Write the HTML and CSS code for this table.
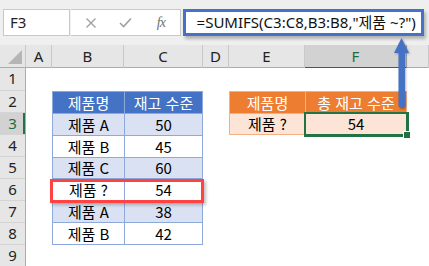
FILE: index.html
```html
<!DOCTYPE html>
<html lang="ko">
<head>
<meta charset="utf-8">
<link rel="stylesheet" href="styles.css">
</head>
<body>
<div class="app">
  <div class="fbar">
    <div class="namebox">F3</div>
    <div class="fbtns">
      <svg class="ic" width="12" height="12" viewBox="0 0 12 12"><path d="M1.5 1.5 L10.5 10.5 M10.5 1.5 L1.5 10.5" stroke="#a0a0a0" stroke-width="1.4" fill="none"/></svg>
      <svg class="ic" width="13" height="11" viewBox="0 0 13 11"><path d="M1 6 L4.6 9.5 L12 1.5" stroke="#a0a0a0" stroke-width="1.6" fill="none"/></svg>
      <span class="fx">fx</span>
    </div>
    <div class="finput">=SUMIFS(C3:C8,B3:B8,"제품 ~?")</div>
  </div>
  <div class="sheet">
    <div class="corner"><span class="tri"></span></div>
    <div class="colheads">
      <div class="ch">A</div>
      <div class="ch">B</div>
      <div class="ch">C</div>
      <div class="ch">D</div>
      <div class="ch">E</div>
      <div class="ch active">F</div>
      <div class="ch"></div>
    </div>
    <div class="rowheads">
      <div class="rh first">1</div>
      <div class="rh">2</div>
      <div class="rh active">3</div>
      <div class="rh">4</div>
      <div class="rh">5</div>
      <div class="rh">6</div>
      <div class="rh">7</div>
      <div class="rh">8</div>
      <div class="rh">9</div>
    </div>
    <div class="body">
      <div class="tbl t1">
        <div class="c hd">제품명</div><div class="c hd">재고 수준</div>
        <div class="c band">제품 A</div><div class="c band">50</div>
        <div class="c">제품 B</div><div class="c">45</div>
        <div class="c band">제품 C</div><div class="c band">60</div>
        <div class="c">제품 ?</div><div class="c">54</div>
        <div class="c band">제품 A</div><div class="c band">38</div>
        <div class="c">제품 B</div><div class="c">42</div>
      </div>
      <div class="tbl t2">
        <div class="c hd">제품명</div><div class="c hd">총 재고 수준</div>
        <div class="c">제품 ?</div><div class="c sel">54</div>
      </div>
      <div class="redbox"></div>
    </div>
  </div>
  <svg class="arrow" width="22" height="78" viewBox="0 0 22 78">
    <path d="M3 17 L10.5 2 L18 17 Z" fill="#4472c4"/>
    <rect x="7.5" y="15" width="6.5" height="57" rx="3" fill="#4472c4"/>
  </svg>
</div>
</body>
</html>
```

FILE: styles.css
```css
* { box-sizing: border-box; }
html, body { margin: 0; padding: 0; background: #fff; }
body { width: 429px; height: 266px; overflow: hidden; font-family: "Noto Sans", "Noto Sans CJK KR", sans-serif; }
.app { position: relative; width: 429px; height: 266px; }

.fbar {
  height: 45px;
  background: #efefef;
  display: flex;
  align-items: flex-start;
  padding: 9px 5px 0 3px;
}
.namebox {
  width: 67px; height: 27px;
  background: #fff;
  border: 1px solid #c8c8c8;
  font: 15px "Noto Sans", sans-serif;
  color: #222;
  line-height: 25px;
  padding-left: 6px;
}
.fbtns {
  width: 110px; height: 27px;
  margin-left: 1px;
  background: #fff;
  border: 1px solid #c8c8c8;
  border-left: none;
  display: flex;
  align-items: center;
  padding-left: 14px;
  gap: 22px;
}
.fx {
  font: italic 14px "Liberation Serif", serif;
  color: #707070;
  margin-left: 3px;
  letter-spacing: -1px;
}
.finput {
  margin-left: 2px;
  width: 242px; height: 27px;
  background: #fff;
  border: 3px solid #4472c4;
  box-shadow: 2px 3px 3px rgba(0,0,0,0.25);
  font: 15px "Noto Sans", "Noto Sans CJK KR", sans-serif;
  color: #111;
  line-height: 20px;
  padding-left: 11px;
  white-space: nowrap;
}

.sheet {
  display: grid;
  grid-template-columns: 26px 1fr;
  grid-template-rows: 23px 1fr;
  height: 221px;
}
.corner {
  background: #e6e6e6;
  border-right: 1px solid #c8c8c8;
  border-bottom: 1px solid #ababab;
  position: relative;
}
.tri {
  position: absolute;
  right: 3px; bottom: 3px;
  width: 0; height: 0;
  border-left: 14px solid transparent;
  border-bottom: 14px solid #b5b5b5;
}
.colheads {
  display: grid;
  grid-template-columns: 26px 72px 79px 26px 76px 102px 1fr;
  background: #e6e6e6;
  border-bottom: 1px solid #ababab;
}
.ch {
  border-right: 1px solid #c8c8c8;
  font: 15px "Noto Sans", sans-serif;
  color: #222;
  text-align: center;
  line-height: 22px;
}
.ch.active {
  background: #d2d2d2;
  border-bottom: 2px solid #217346;
  color: #1e6b40;
  border-right-color: #ababab;
}
.rowheads {
  display: flex;
  flex-direction: column;
  background: #e6e6e6;
  border-right: 1px solid #ababab;
}
.rh {
  height: 22px;
  flex: none;
  border-bottom: 1px solid #d4d4d4;
  font: 15px "Noto Sans", sans-serif;
  color: #222;
  text-align: center;
  line-height: 21px;
}
.rh.first { height: 23px; }
.rh.active {
  background: #d2d2d2;
  color: #1e6b40;
  box-shadow: inset -2px 0 0 #217346;
}

.body {
  position: relative;
  display: grid;
  grid-template-columns: 26px 72px 79px 26px 76px 102px 1fr;
  grid-template-rows: 23px repeat(8, 22px);
  background: #fff;
}
.tbl {
  display: grid;
  font: 15px "Noto Sans CJK KR", sans-serif;
  color: #000;
}
.t1 {
  grid-column: 2 / 4;
  grid-row: 2 / 9;
  grid-template-columns: 72px 1fr;
  grid-template-rows: repeat(7, 1fr);
  border-left: 1px solid #8ea9db;
  border-top: 1px solid #8ea9db;
}
.t1 .c { border-right: 1px solid #8ea9db; border-bottom: 1px solid #8ea9db; }
.t1 .hd { background: #4472c4; color: #fff; }
.t1 .band { background: #d9e1f2; }
.t2 {
  grid-column: 5 / 7;
  grid-row: 2 / 4;
  grid-template-columns: 76px 1fr;
  grid-template-rows: repeat(2, 1fr);
  border-left: 1px solid #f4b084;
  border-top: 1px solid #f4b084;
}
.t2 .c { border-right: 1px solid #f4b084; border-bottom: 1px solid #f4b084; background: #fce4d6; }
.t2 .hd { background: #ed7d31; color: #fff; }
.c {
  display: flex;
  align-items: center;
  justify-content: center;
  line-height: 1;
  white-space: nowrap;
}
.c.sel {
  position: relative;
  box-shadow: 0 0 0 2px #217346;
  border-right-color: #217346;
  border-bottom-color: #217346;
}
.c.sel::after {
  content: "";
  position: absolute;
  right: -5px; bottom: -5px;
  width: 6px; height: 6px;
  background: #217346;
  border: 1px solid #fff;
}
.redbox {
  position: absolute;
  left: 24px; top: 111px;
  width: 154px; height: 24px;
  border: 3px solid #ff4343;
  box-shadow: 2px 2px 3px rgba(0,0,0,0.25);
}
.arrow {
  position: absolute;
  left: 391px; top: 36px;
  filter: drop-shadow(1px 1px 1px rgba(0,0,0,0.3));
}
```
